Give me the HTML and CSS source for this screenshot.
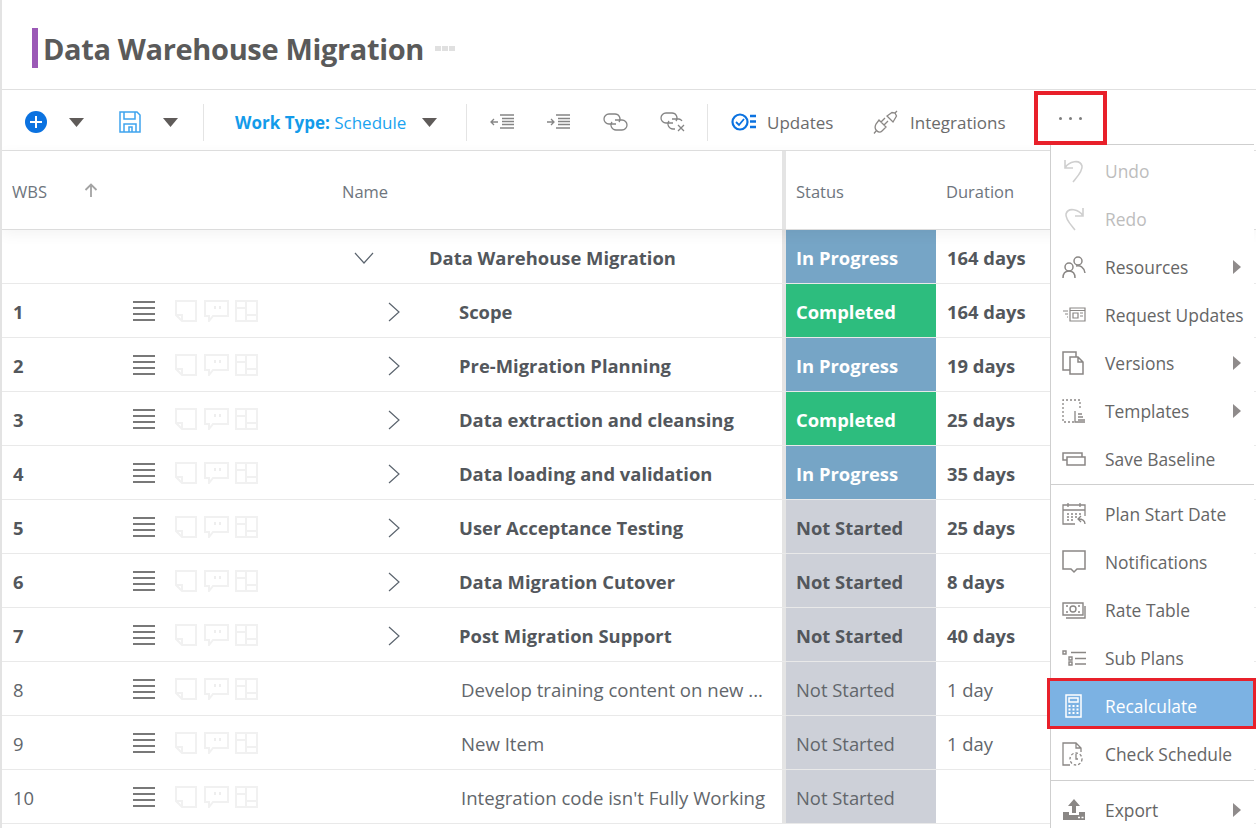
FILE: index.html
```html
<!DOCTYPE html>
<html lang="en">
<head>
    <meta charset="UTF-8">
    <meta name="viewport" content="width=device-width, initial-scale=1.0">
    <title>Data Warehouse Migration</title>
    <link rel="stylesheet" href="styles.css">
</head>
<body>
    <svg class="defs" width="0" height="0">
        <symbol id="caret" viewBox="0 0 15 9"><path d="M0 0h15L7.5 9z" fill="#5f5b59"/></symbol>
        <symbol id="handle" viewBox="0 0 22 20"><path d="M0 1h22M0 7h22M0 13h22M0 19h22" stroke="#4c4c4c" stroke-width="1.4" fill="none"/></symbol>
        <symbol id="note" viewBox="0 0 22 22"><path d="M1 1h20v20H7l-6-6zM1 15h6v6" fill="none" stroke="#f1f1f1" stroke-width="2"/></symbol>
        <symbol id="chat" viewBox="0 0 25 22"><path d="M1 1h23v15H9l-4 5v-5H1z" fill="none" stroke="#f1f1f1" stroke-width="2"/><path d="M10 6h2v3h-2zM15 6h2v3h-2z" fill="#eee"/></symbol>
        <symbol id="board" viewBox="0 0 23 22"><path d="M1 1h21v20H1zM11 1v20M11 8H1M11 15h11" fill="none" stroke="#f1f1f1" stroke-width="2"/></symbol>
        <symbol id="right" viewBox="0 0 12 20"><path d="M1 1l10 9-10 9" fill="none" stroke="#5b646e" stroke-width="1.2"/></symbol>
    </svg>

    <div class="app">
        <header class="title-bar">
            <span class="title-mark"></span>
            <h1 class="title">Data Warehouse Migration</h1>
            <span class="title-dots"><i></i><i></i><i></i></span>
        </header>

        <div class="toolbar">
            <svg class="tb-add" width="22" height="22" viewBox="0 0 22 22"><circle cx="11" cy="11" r="11" fill="#0b72e0"/><path d="M11 5v12M5 11h12" stroke="#fff" stroke-width="2"/></svg>
            <svg class="tb-caret-a" width="15" height="9"><use href="#caret"/></svg>
            <svg class="tb-save" width="22" height="22" viewBox="0 0 22 22" fill="none" stroke="#3fa4ee" stroke-width="1.5"><path d="M1 1h17l3 3v17H1z"/><path d="M5 1v7h11V1M5 21v-8h12v8M10 21v-5h3v5"/></svg>
            <svg class="tb-caret-a" width="15" height="9"><use href="#caret"/></svg>
            <span class="tb-sep tb-sep-a"></span>
            <span class="work-type"><b>Work Type:</b> Schedule</span>
            <svg class="tb-caret-b" width="15" height="9"><use href="#caret"/></svg>
            <span class="tb-sep tb-sep-b"></span>
            <svg class="tb-outdent" width="25" height="16" viewBox="0 0 25 16" fill="none" stroke="#858585" stroke-width="1.3"><path d="M10 1h14M12 4.5h12M12 7.5h12M12 10.5h12M10 14h14M8 8H1M4 5L1 8l3 3"/></svg>
            <svg class="tb-indent" width="25" height="16" viewBox="0 0 25 16" fill="none" stroke="#858585" stroke-width="1.3"><path d="M10 1h14M12 4.5h12M12 7.5h12M12 10.5h12M10 14h14M1 8h7M5 5l3 3-3 3"/></svg>
            <svg class="tb-link" width="25" height="18" viewBox="0 0 25 18" fill="none" stroke="#858585" stroke-width="1.3"><path d="M13 11H6A5 5 0 0 1 6 1h6a5 5 0 0 1 4 8"/><path d="M12 7h7a5 5 0 0 1 0 10h-6a5 5 0 0 1-4-8"/></svg>
            <svg class="tb-unlink" width="25" height="20" viewBox="0 0 25 20" fill="none" stroke="#858585" stroke-width="1.3"><path d="M13 11H6A5 5 0 0 1 6 1h6a5 5 0 0 1 4 8"/><path d="M12 7h7a5 5 0 0 1 3 2M15 17h-2a5 5 0 0 1-4-8M18 13l6 6M24 13l-6 6"/></svg>
            <span class="tb-sep tb-sep-c"></span>
            <svg class="tb-updates" width="26" height="18" viewBox="0 0 26 18" fill="none"><circle cx="9" cy="9" r="7.5" stroke="#0b72e0" stroke-width="2.2"/><path d="M5 9l3 3 5-6" stroke="#0b72e0" stroke-width="1.8"/><path d="M19 3h6M19 8.5h6M19 14h6" stroke="#0b72e0" stroke-width="2.4"/></svg>
            <span class="tb-text tb-text-a">Updates</span>
            <svg class="tb-plug" width="25" height="25" viewBox="0 0 25 25" fill="none" stroke="#8a8785" stroke-width="1.3"><path d="M14 6l6 6 3.500-6-1.500-3-3-.5zM22 3l2-2"/><path d="M6 10l7 7-4 4c-2 2-4 1-5.500-.5S1.500 17 3 14zM3.500 20.500L1 23.500M8 12l4-4M11 15l4-4"/></svg>
            <span class="tb-text tb-text-b">Integrations</span>
            <button class="more-btn"><i></i><i></i><i></i></button>
        </div>

        <div class="sheet">
            <div class="sheet-head">
                <div class="head-left">
                    <span class="head-wbs">WBS</span>
                    <svg class="head-arrow" width="14" height="14" viewBox="0 0 14 14" fill="none" stroke="#a3a3a3" stroke-width="1.8"><path d="M7 14V2M1.5 7L7 1.5 12.5 7"/></svg>
                    <span class="head-name">Name</span>
                </div>
                <span class="splitter"></span>
                <span class="head-status">Status</span>
                <span class="head-duration">Duration</span>
            </div>

            <div class="row bold">
                <div class="left">
                    <svg class="down" width="20" height="12" viewBox="0 0 20 12"><path d="M1 1l9 10 9-10" fill="none" stroke="#5b646e" stroke-width="1.2"/></svg>
                    <span class="root-name">Data Warehouse Migration</span>
                </div>
                <span class="splitter"></span>
                <span class="status progress">In Progress</span>
                <span class="duration">164 days</span>
            </div>

            <div class="row bold">
                <div class="left">
                    <span class="wbs">1</span>
                    <svg class="handle" width="22" height="20"><use href="#handle"/></svg>
                    <span class="tools"><svg width="22" height="22"><use href="#note"/></svg><svg width="25" height="22"><use href="#chat"/></svg><svg width="23" height="22"><use href="#board"/></svg></span>
                    <svg class="chev" width="12" height="20"><use href="#right"/></svg>
                    <span class="name">Scope</span>
                </div>
                <span class="splitter"></span>
                <span class="status done">Completed</span>
                <span class="duration">164 days</span>
            </div>

            <div class="row bold">
                <div class="left">
                    <span class="wbs">2</span>
                    <svg class="handle" width="22" height="20"><use href="#handle"/></svg>
                    <span class="tools"><svg width="22" height="22"><use href="#note"/></svg><svg width="25" height="22"><use href="#chat"/></svg><svg width="23" height="22"><use href="#board"/></svg></span>
                    <svg class="chev" width="12" height="20"><use href="#right"/></svg>
                    <span class="name">Pre-Migration Planning</span>
                </div>
                <span class="splitter"></span>
                <span class="status progress">In Progress</span>
                <span class="duration">19 days</span>
            </div>

            <div class="row bold">
                <div class="left">
                    <span class="wbs">3</span>
                    <svg class="handle" width="22" height="20"><use href="#handle"/></svg>
                    <span class="tools"><svg width="22" height="22"><use href="#note"/></svg><svg width="25" height="22"><use href="#chat"/></svg><svg width="23" height="22"><use href="#board"/></svg></span>
                    <svg class="chev" width="12" height="20"><use href="#right"/></svg>
                    <span class="name">Data extraction and cleansing</span>
                </div>
                <span class="splitter"></span>
                <span class="status done">Completed</span>
                <span class="duration">25 days</span>
            </div>

            <div class="row bold">
                <div class="left">
                    <span class="wbs">4</span>
                    <svg class="handle" width="22" height="20"><use href="#handle"/></svg>
                    <span class="tools"><svg width="22" height="22"><use href="#note"/></svg><svg width="25" height="22"><use href="#chat"/></svg><svg width="23" height="22"><use href="#board"/></svg></span>
                    <svg class="chev" width="12" height="20"><use href="#right"/></svg>
                    <span class="name">Data loading and validation</span>
                </div>
                <span class="splitter"></span>
                <span class="status progress">In Progress</span>
                <span class="duration">35 days</span>
            </div>

            <div class="row bold">
                <div class="left">
                    <span class="wbs">5</span>
                    <svg class="handle" width="22" height="20"><use href="#handle"/></svg>
                    <span class="tools"><svg width="22" height="22"><use href="#note"/></svg><svg width="25" height="22"><use href="#chat"/></svg><svg width="23" height="22"><use href="#board"/></svg></span>
                    <svg class="chev" width="12" height="20"><use href="#right"/></svg>
                    <span class="name">User Acceptance Testing</span>
                </div>
                <span class="splitter"></span>
                <span class="status idle">Not Started</span>
                <span class="duration">25 days</span>
            </div>

            <div class="row bold">
                <div class="left">
                    <span class="wbs">6</span>
                    <svg class="handle" width="22" height="20"><use href="#handle"/></svg>
                    <span class="tools"><svg width="22" height="22"><use href="#note"/></svg><svg width="25" height="22"><use href="#chat"/></svg><svg width="23" height="22"><use href="#board"/></svg></span>
                    <svg class="chev" width="12" height="20"><use href="#right"/></svg>
                    <span class="name">Data Migration Cutover</span>
                </div>
                <span class="splitter"></span>
                <span class="status idle">Not Started</span>
                <span class="duration">8 days</span>
            </div>

            <div class="row bold">
                <div class="left">
                    <span class="wbs">7</span>
                    <svg class="handle" width="22" height="20"><use href="#handle"/></svg>
                    <span class="tools"><svg width="22" height="22"><use href="#note"/></svg><svg width="25" height="22"><use href="#chat"/></svg><svg width="23" height="22"><use href="#board"/></svg></span>
                    <svg class="chev" width="12" height="20"><use href="#right"/></svg>
                    <span class="name">Post Migration Support</span>
                </div>
                <span class="splitter"></span>
                <span class="status idle">Not Started</span>
                <span class="duration">40 days</span>
            </div>

            <div class="row">
                <div class="left">
                    <span class="wbs">8</span>
                    <svg class="handle" width="22" height="20"><use href="#handle"/></svg>
                    <span class="tools"><svg width="22" height="22"><use href="#note"/></svg><svg width="25" height="22"><use href="#chat"/></svg><svg width="23" height="22"><use href="#board"/></svg></span>
                    <span class="leaf-name">Develop training content on new ...</span>
                </div>
                <span class="splitter"></span>
                <span class="status idle">Not Started</span>
                <span class="duration">1 day</span>
            </div>

            <div class="row">
                <div class="left">
                    <span class="wbs">9</span>
                    <svg class="handle" width="22" height="20"><use href="#handle"/></svg>
                    <span class="tools"><svg width="22" height="22"><use href="#note"/></svg><svg width="25" height="22"><use href="#chat"/></svg><svg width="23" height="22"><use href="#board"/></svg></span>
                    <span class="leaf-name">New Item</span>
                </div>
                <span class="splitter"></span>
                <span class="status idle">Not Started</span>
                <span class="duration">1 day</span>
            </div>

            <div class="row">
                <div class="left">
                    <span class="wbs">10</span>
                    <svg class="handle" width="22" height="20"><use href="#handle"/></svg>
                    <span class="tools"><svg width="22" height="22"><use href="#note"/></svg><svg width="25" height="22"><use href="#chat"/></svg><svg width="23" height="22"><use href="#board"/></svg></span>
                    <span class="leaf-name">Integration code isn't Fully Working</span>
                </div>
                <span class="splitter"></span>
                <span class="status idle">Not Started</span>
                <span class="duration"></span>
            </div>
        </div>

        <nav class="more-menu">
            <div class="item disabled">
                <svg width="24" height="26" viewBox="0 0 24 26" fill="none" stroke="#cfcfcf" stroke-width="1.6"><path d="M3 2v8h8M3 10C7 3 18 1 20 8c1 5-5 11-9 16"/></svg>
                <span>Undo</span>
            </div>
            <div class="item disabled">
                <svg width="24" height="26" viewBox="0 0 24 26" fill="none" stroke="#cfcfcf" stroke-width="1.6"><path d="M21 2v8h-8M21 10C17 3 6 1 4 8c-1 5 5 11 9 16"/></svg>
                <span>Redo</span>
            </div>
            <div class="item">
                <svg width="24" height="24" viewBox="0 0 24 24" fill="none" stroke="#8a8785" stroke-width="1.5"><circle cx="16" cy="6" r="4"/><circle cx="7" cy="12" r="4"/><path d="M1 23c0-4 2-7 6-7s6 3 6 7M14 11c4-1 8 1 9 7"/></svg>
                <span>Resources</span>
                <i class="sub-arrow"></i>
            </div>
            <div class="item">
                <svg width="24" height="16" viewBox="0 0 24 16" fill="none" stroke="#8a8785" stroke-width="1.2"><path d="M8 1h15v13H8zM8 3.5h15M1 4h5M3 7h3M5 10h1M11 6h5v5h-5zM18 6h3M18 9h3"/></svg>
                <span>Request Updates</span>
            </div>
            <div class="item">
                <svg width="22" height="24" viewBox="0 0 22 24" fill="none" stroke="#8a8785" stroke-width="1.5"><path d="M14 6V1H1v18h7M8 6h8l5 5v12H8zM16 6v5h5"/></svg>
                <span>Versions</span>
                <i class="sub-arrow"></i>
            </div>
            <div class="item">
                <svg width="24" height="24" viewBox="0 0 24 24" fill="none" stroke="#8a8785" stroke-width="1.3"><path d="M12 23H1V1h17v10" stroke-dasharray="2 2"/><path d="M13 12v11h10M16 15h4M16 18h5M16 21h7"/></svg>
                <span>Templates</span>
                <i class="sub-arrow"></i>
            </div>
            <div class="item">
                <svg width="24" height="14" viewBox="0 0 24 14" fill="none" stroke="#8a8785" stroke-width="1.5"><path d="M5 8H1V1h19v4M5 5h18v8H5z"/></svg>
                <span>Save Baseline</span>
            </div>
            <div class="menu-line"></div>
            <div class="item">
                <svg width="24" height="24" viewBox="0 0 24 24" fill="none" stroke="#8a8785" stroke-width="1.3"><path d="M13 22H1V3h22v11M1 8h22M6 1v4M18 1v4"/><path d="M5 12h2M9 12h2M13 12h2M17 12h2M5 15h2M9 15h2M13 15h2M5 18h2M9 18h2" stroke-width="1.5"/><path d="M23 22c0-3-2-5-7-5M19 14l-3 3 3 3"/></svg>
                <span>Plan Start Date</span>
            </div>
            <div class="item">
                <svg width="24" height="24" viewBox="0 0 24 24" fill="none" stroke="#8a8785" stroke-width="1.5"><path d="M1 1h22v18h-8l-3 3-3-3H1z"/></svg>
                <span>Notifications</span>
            </div>
            <div class="item">
                <svg width="24" height="18" viewBox="0 0 24 18" fill="none" stroke="#8a8785" stroke-width="1.4"><path d="M1 2h20v12H1zM4 17h19V5"/><circle cx="11" cy="8" r="3"/><path d="M4 5h2M4 11h2M16 5h2M16 11h2"/></svg>
                <span>Rate Table</span>
            </div>
            <div class="item">
                <svg width="24" height="16" viewBox="0 0 24 16" fill="none" stroke="#8a8785" stroke-width="1.4"><path d="M1 1h3v3H1zM7 7h3v3H7zM7 12h3v3H7zM9 2.5h15M13 8.5h11M13 14h11"/></svg>
                <span>Sub Plans</span>
            </div>
            <div class="item active">
                <svg width="17" height="24" viewBox="0 0 17 24" fill="none" stroke="#fff" stroke-width="1.5"><path d="M1 1h15v22H1zM4 4h9v4H4z"/><path d="M3.5 12h2M7.5 12h2M11.5 12h2M3.5 15.5h2M7.5 15.5h2M11.5 15.5h2M3.5 19h2M7.5 19h2M11.5 19h2" stroke-width="2"/></svg>
                <span>Recalculate</span>
            </div>
            <div class="item">
                <svg width="24" height="24" viewBox="0 0 24 24" fill="none" stroke="#8a8785" stroke-width="1.3"><path d="M8 23H1V1h13l5 5v4M14 1v5h5"/><circle cx="14" cy="17" r="6" stroke-dasharray="2.5 2"/><path d="M14 12v5h2"/></svg>
                <span>Check Schedule</span>
            </div>
            <div class="menu-line menu-line-low"></div>
            <div class="item">
                <svg width="24" height="22" viewBox="0 0 24 22"><path d="M12 0l6 7h-4v7h-4V7H6zM1 13h6v3h10v-3h6v8H1z" fill="#8a8785"/><path d="M16 18.5h2M19.5 18.5h2" stroke="#fff" stroke-width="1.5"/></svg>
                <span>Export</span>
                <i class="sub-arrow"></i>
            </div>
        </nav>
    </div>
</body>
</html>
```

FILE: styles.css
```css
* {
    box-sizing: border-box;
}
html, body {
    height: 100%;
}
body {
    margin: 0;
    overflow: hidden;
    background: #fff;
    font-family: "Open Sans", "Noto Sans", Arial, sans-serif;
    color: #5a5f66;
}
.defs {
    display: none;
}
.app {
    position: relative;
    height: 828px;
    overflow: hidden;
    border-left: 2px solid #e3e3e3;
}

/* title */
.title-bar {
    display: flex;
    align-items: center;
    height: 90px;
    padding: 14px 0 7px 30px;
    border-bottom: 1px solid #e0e0e0;
}
.title-mark {
    width: 6px;
    height: 40px;
    background: #9b59b6;
}
.title {
    margin: 0 0 0 5px;
    font-size: 29px;
    font-weight: 700;
    letter-spacing: -0.35px;
    color: #5a5a5a;
}
.title-dots {
    display: flex;
    gap: 1px;
    margin-left: 11px;
}
.title-dots i {
    width: 6px;
    height: 5px;
    background: #e0e0e0;
}

/* toolbar */
.toolbar {
    display: flex;
    align-items: center;
    height: 61px;
    padding-top: 4px;
    border-bottom: 1px solid #e0e0e0;
    font-size: 17px;
    color: #6b6b6b;
}
.toolbar svg {
    flex: none;
}
.tb-add { margin-left: 23px; }
.tb-caret-a { margin-left: 22px; }
.tb-save { margin-left: 35px; }
.tb-sep {
    width: 1px;
    height: 37px;
    background: #e4e4e4;
}
.tb-sep-a { margin-left: 25px; }
.work-type {
    margin-left: 31px;
    width: 172px;
    white-space: nowrap;
    color: #1aa3f0;
}
.work-type b {
    font-weight: 700;
    color: #139bea;
}
.tb-caret-b { margin-left: 15px; }
.tb-sep-b { margin-left: 29px; }
.tb-outdent { margin-left: 23px; }
.tb-indent { margin-left: 31px; }
.tb-link { margin-left: 32px; }
.tb-unlink { margin-left: 32px; }
.tb-sep-c { margin-left: 22px; }
.tb-updates { margin-left: 23px; }
.tb-text {
    white-space: nowrap;
}
.tb-text-a { margin-left: 10px; width: 66px; }
.tb-plug { margin-left: 40px; }
.tb-text-b { margin-left: 12px; width: 95px; }
.more-btn {
    display: flex;
    align-items: center;
    justify-content: center;
    align-self: flex-start;
    gap: 7px;
    width: 73px;
    height: 54px;
    margin: -3px 0 0 29px;
    padding: 0;
    background: #fff;
    border: 4px solid #e8202a;
    position: relative;
    z-index: 3;
}
.more-btn i {
    width: 3px;
    height: 3px;
    border-radius: 50%;
    background: #7d7d7d;
}

/* sheet */
.sheet {
    font-size: 18.4px;
}
.sheet-head {
    position: relative;
    display: flex;
    align-items: stretch;
    height: 79px;
    border-bottom: 1px solid #dcdcdc;
    box-shadow: 0 4px 14px rgba(0, 0, 0, 0.05);
    font-size: 16.5px;
    color: #6e757d;
}
.head-left {
    display: flex;
    align-items: center;
    width: 780px;
    padding-top: 2px;
}
.head-wbs { margin-left: 10px; width: 72px; }
.head-arrow { margin-bottom: 2px; }
.head-name { margin-left: 244px; }
.splitter {
    width: 4px;
    background: #e4e4e4;
    flex: none;
}
.head-status {
    width: 160px;
    padding: 2px 0 0 10px;
    align-self: center;
}
.head-duration {
    padding-top: 2px;
    align-self: center;
}
.row {
    display: flex;
    height: 54px;
    border-bottom: 1px solid #e9e9e9;
    color: #62666b;
}
.row.bold {
    font-weight: 700;
    color: #53575c;
}
.left {
    display: flex;
    align-items: center;
    width: 780px;
    padding-top: 2px;
    white-space: nowrap;
}
.wbs { width: 131px; padding-left: 11px; }
.handle {
    flex: none;
    margin-bottom: 2px;
}
.tools {
    display: flex;
    gap: 6.5px;
    margin: 0 0 2px 20px;
}
.chev { margin-left: 130px; flex: none; }
.name { margin-left: 59px; }
.leaf-name { margin-left: 203px; font-size: 18.6px; }
.down { margin-left: 352px; flex: none; }
.root-name { margin-left: 55px; }
.status {
    display: flex;
    align-items: center;
    width: 150px;
    padding: 2px 0 0 10px;
    white-space: nowrap;
}
.progress { background: #76a5c6; color: #fff; }
.done { background: #2dbd7e; color: #fff; }
.idle { background: #cdd0d8; }
.duration {
    display: flex;
    align-items: center;
    padding: 2px 0 0 11px;
    white-space: nowrap;
}

/* more menu */
.more-menu {
    position: absolute;
    top: 144px;
    left: 1048px;
    width: 204px;
    height: 690px;
    padding-top: 2px;
    background: #fff;
    border-top: 1px solid #cfcfcf;
    border-left: 1px solid #cfcfcf;
    font-size: 17.4px;
    color: #666;
    z-index: 2;
}
.item {
    position: relative;
    display: flex;
    align-items: center;
    height: 48px;
    padding-left: 11px;
    white-space: nowrap;
}
.item svg {
    flex: none;
}
.item span {
    position: absolute;
    left: 54px;
}
.disabled { color: #bdbdbd; }
.active {
    height: 51px;
    margin: -4px -2px 1px -4px;
    padding: 4px 0 0 15px;
    background: #7cb2e3;
    border: 3px solid #e8202a;
    color: #fff;
}
.active span { left: 55px; }
.sub-arrow {
    position: absolute;
    right: 13px;
    width: 0;
    height: 0;
    border-left: 8px solid #8f8b8b;
    border-top: 7px solid transparent;
    border-bottom: 7px solid transparent;
}
.menu-line {
    height: 1px;
    margin: 1px 0 5px;
    background: #cfcfcf;
}
.menu-line-low {
    margin: 2px 0 5px;
}
```
